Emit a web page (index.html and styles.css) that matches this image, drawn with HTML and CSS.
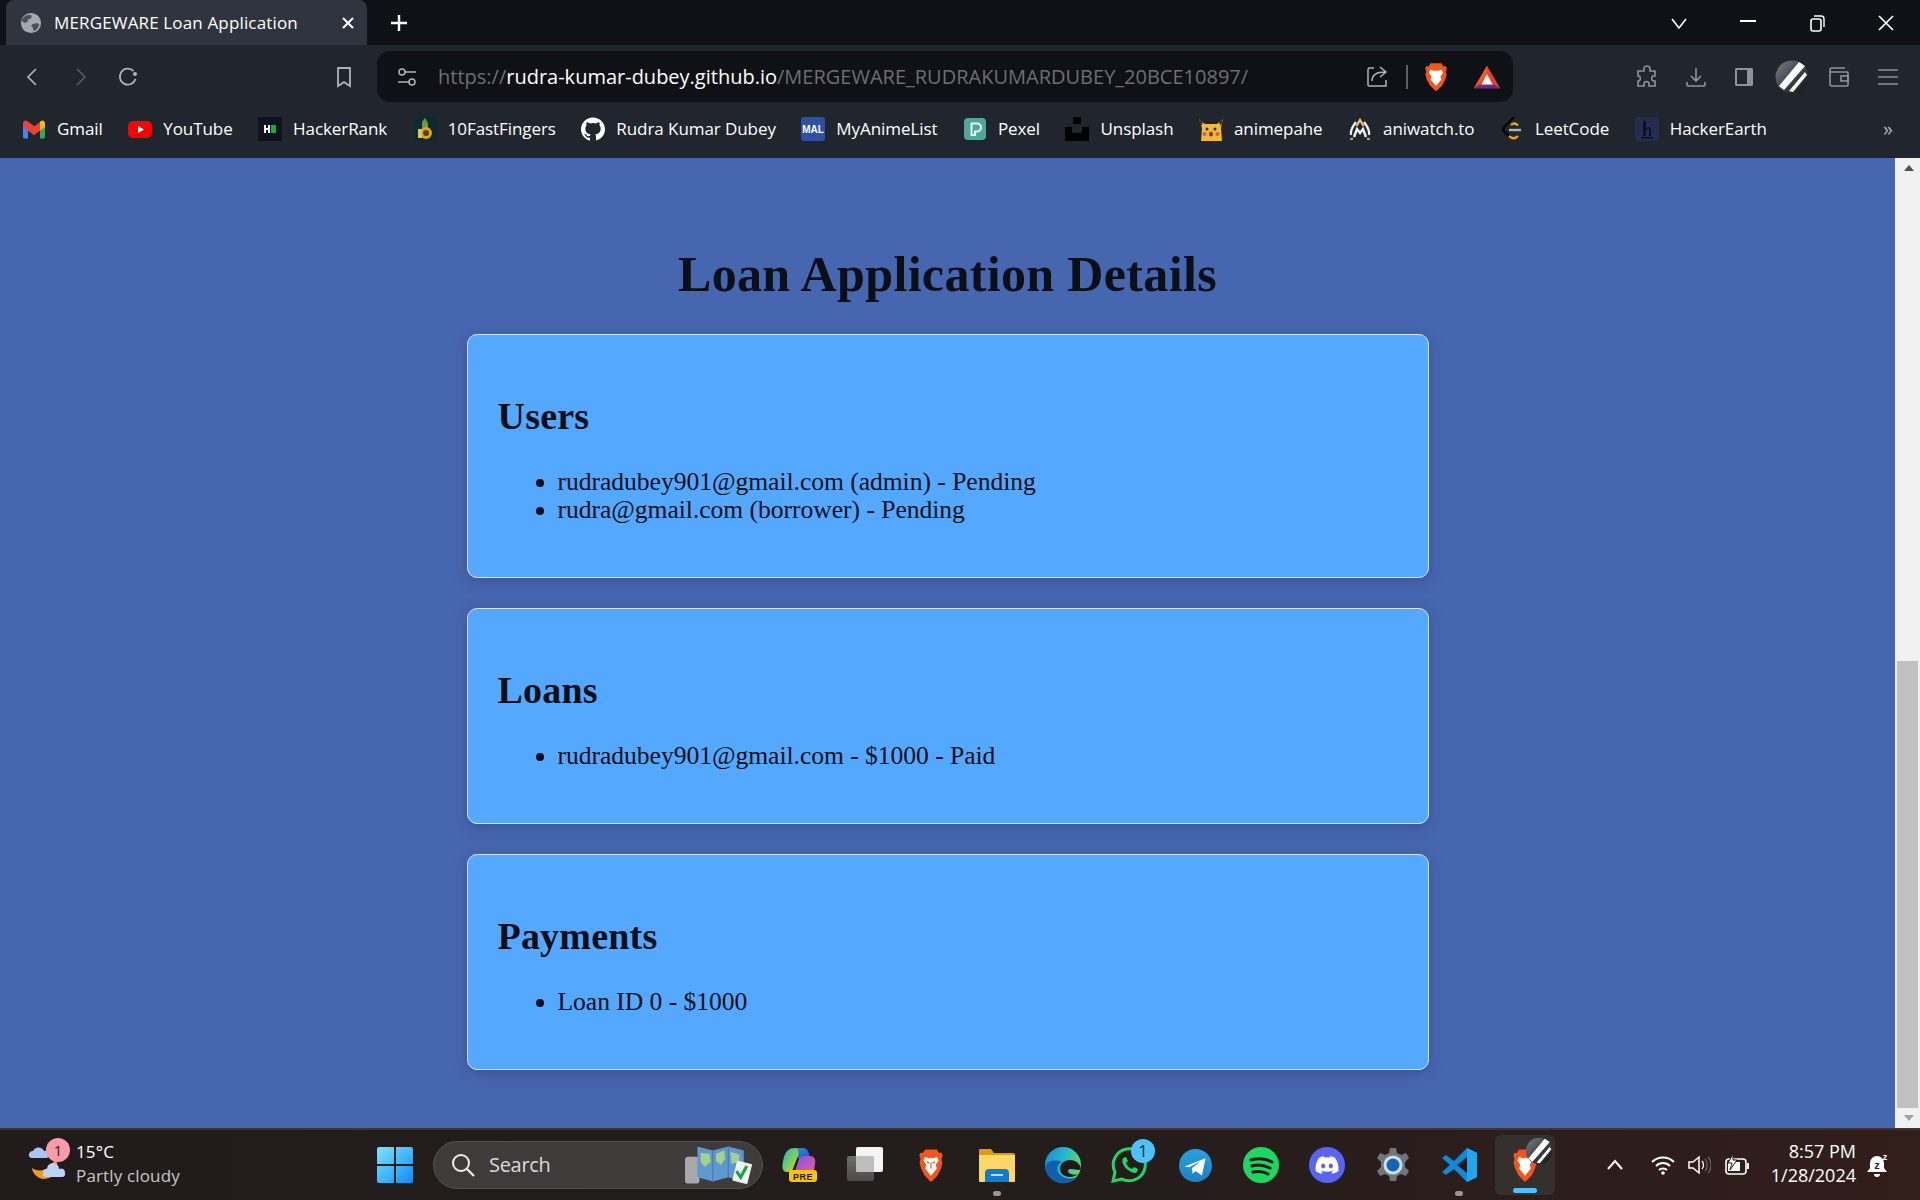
FILE: index.html
```html
<!DOCTYPE html>
<html lang="en">
<head>
<meta charset="utf-8">
<title>MERGEWARE Loan Application</title>
<link rel="stylesheet" href="styles.css">
</head>
<body>
<header class="browser">
  <div class="tabstrip">
    <div class="tab">
      <svg class="tab-globe" viewBox="0 0 24 24"><circle cx="12" cy="12" r="11" fill="#a3a8b1"/><path d="M5 5c3-2 6-2 8-1l-1 3-3 1-1 3-3 1-3-2c0-2 1-3 3-5zM14 13l5-1 2 2c-1 3-3 6-6 7l-1-4-2-2z" fill="#4c5059"/></svg>
      <span class="tab-title">MERGEWARE Loan Application</span>
      <svg class="tab-close" viewBox="0 0 14 14"><path d="M2 2l10 10M12 2L2 12" stroke="#fff" stroke-width="2"/></svg>
    </div>
    <svg class="new-tab" viewBox="0 0 18 18"><path d="M9 1v16M1 9h16" stroke="#fff" stroke-width="2.4"/></svg>
    <div class="win-controls">
      <svg class="wc" viewBox="0 0 18 18"><path d="M2 5l7 9 7-9" fill="none" stroke="#fff" stroke-width="1.6"/></svg>
      <svg class="wc" viewBox="0 0 18 18"><path d="M1 7h16" stroke="#fff" stroke-width="2"/></svg>
      <svg class="wc" viewBox="0 0 18 18"><rect x="3" y="5" width="10" height="12" rx="2" fill="none" stroke="#fff" stroke-width="1.6"/><path d="M6 2h7a3 3 0 0 1 3 3v8" fill="none" stroke="#fff" stroke-width="1.4"/></svg>
      <svg class="wc" viewBox="0 0 18 18"><path d="M2 2l14 14M16 2L2 16" stroke="#fff" stroke-width="1.7"/></svg>
    </div>
  </div>
  <div class="toolbar">
    <svg class="tb tb-back" viewBox="0 0 24 24"><path d="M15 4l-8 8 8 8" fill="none" stroke="#aeb4bd" stroke-width="1.7"/></svg>
    <svg class="tb tb-fwd" viewBox="0 0 24 24"><path d="M9 4l8 8-8 8" fill="none" stroke="#565b64" stroke-width="1.7"/></svg>
    <svg class="tb tb-reload" viewBox="0 0 24 24"><path d="M19.500 14a8 8 0 1 1-2-8" fill="none" stroke="#aeb4bd" stroke-width="1.8"/><circle cx="19" cy="9" r="2" fill="#aeb4bd"/></svg>
    <svg class="tb tb-mark" viewBox="0 0 24 24"><path d="M6 3h12v18l-6-4-6 4z" fill="none" stroke="#aeb4bd" stroke-width="1.8"/></svg>
    <div class="urlbar">
      <svg class="url-tune" viewBox="0 0 24 24"><circle cx="7" cy="7" r="3" fill="none" stroke="#aeb4bd" stroke-width="1.5"/><path d="M10 7h11M3 17h11" stroke="#aeb4bd" stroke-width="1.5"/><circle cx="17" cy="17" r="3" fill="none" stroke="#aeb4bd" stroke-width="1.5"/></svg>
      <div class="url-text"><span class="url-dim">https://</span><span class="url-host">rudra-kumar-dubey.github.io</span><span class="url-dim">/MERGEWARE_RUDRAKUMARDUBEY_20BCE10897/</span></div>
      <svg class="url-share" viewBox="0 0 24 24"><path d="M9 3H4a2 2 0 0 0-1 2v15a1 1 0 0 0 1 1h17v-6" fill="none" stroke="#aeb4bd" stroke-width="1.5"/><path d="M7 16c0-6 5-9 13-9M15 2l6 5-6 5" fill="none" stroke="#aeb4bd" stroke-width="1.5"/></svg>
      <span class="url-sep"></span>
      <svg class="url-brave" viewBox="0 0 24 24" preserveAspectRatio="none"><path d="M7 1h10l2 2.500 2-.3 1 2-1 2.500.8 2.500-1.300 4-3 4.800L12.500 23h-1L6.500 18.800l-3-4.800-1.300-4L3 7.500 2 5l1-1.800 2 .3z" fill="#f1561f"/><path d="M7 6l3.500 1.200L12 6.500l1.500.7L17 6l1.500 2.500-2.500 3 1 2.500-3.500 3.500-1.500 1.500-1.500-1.500L7 14l1-2.500-2.500-3z" fill="#fff"/></svg>
      <svg class="url-bat" viewBox="0 0 30 26"><path d="M15 1L29 25H1z" fill="#e8432e"/><path d="M15 1v10L1 25z" fill="#f05a28"/><path d="M1 25l6-4h16l6 4z" fill="#662d91"/><path d="M15 10l6 11H9z" fill="#fff"/></svg>
    </div>
    <svg class="tb tb-puzzle" viewBox="0 0 24 24"><path d="M9 4a3 3 0 0 1 6 0v2h5v5h-2a3 3 0 0 0 0 5h2v5h-6v-2a2.500 2.500 0 0 0-5 0v2H3v-5h1a3 3 0 0 0 0-5H3V6h6z" fill="none" stroke="#8c939e" stroke-width="1.6"/></svg>
    <svg class="tb tb-dl" viewBox="0 0 24 24"><path d="M12 3v13M7 11l5 5 5-5M3 17v3a1 1 0 0 0 1 1h16a1 1 0 0 0 1-1v-3" fill="none" stroke="#8c939e" stroke-width="1.6"/></svg>
    <svg class="tb tb-side" viewBox="0 0 24 24"><rect x="3" y="3" width="18" height="18" rx="1.500" fill="#8c939e"/><rect x="5" y="5" width="10" height="14" fill="#21252d"/></svg>
    <svg class="tb-avatar" viewBox="0 0 34 34"><defs><linearGradient id="av" x1="0" y1="0" x2="1" y2="1"><stop offset="0" stop-color="#7a7e88"/><stop offset="1" stop-color="#0c0c0e"/></linearGradient></defs><circle cx="17" cy="17" r="16.500" fill="url(#av)"/><path d="M24 2l6 4L9 30l-5-4zM30 12l2 3-14 17-4-1z" fill="#fff"/></svg>
    <svg class="tb tb-wallet" viewBox="0 0 24 24"><path d="M18 3H5a2 2 0 0 0-2 2v14a2 2 0 0 0 2 2h15a1 1 0 0 0 1-1V8a1 1 0 0 0-1-1H3" fill="none" stroke="#8c939e" stroke-width="1.6"/><rect x="14" y="11" width="7" height="5" fill="none" stroke="#8c939e" stroke-width="1.6"/></svg>
    <svg class="tb tb-menu" viewBox="0 0 24 24"><path d="M2 5h20M2 12h20M2 19h20" stroke="#8c939e" stroke-width="1.6"/></svg>
  </div>
  <nav class="bookmarks">
    <a class="bm"><svg class="bm-ico" viewBox="0 0 24 24"><path d="M1 7v13a1.500 1.500 0 0 0 1.500 1.500H6V10z" fill="#4285f4"/><path d="M18 10v11.500h3.500A1.500 1.500 0 0 0 23 20V7z" fill="#34a853"/><path d="M1 6.500C1 4 3.500 2.800 5.500 4.200L12 9l6 4.500-6 4.500-6-4.500L1 10z" fill="#ea4335"/><path d="M6 13.500L12 18l6-4.500V5l-6 4.500L6 5z" fill="#ea4335"/><path d="M18 5l.5-.8C20.500 2.800 23 4 23 6.500V10l-5 3.500z" fill="#fbbc04"/></svg><span>Gmail</span></a>
    <a class="bm"><svg class="bm-ico" viewBox="0 0 24 24"><rect x="0" y="4" width="24" height="17" rx="5" fill="#fe0000"/><path d="M10 9l6 3.500-6 3.500z" fill="#fff"/></svg><span>YouTube</span></a>
    <a class="bm"><svg class="bm-ico" viewBox="0 0 24 24"><rect width="24" height="24" fill="#0e141e"/><path d="M6 8h2v3h2V8h2v8h-2v-3H8v3H6z" fill="#fff"/><rect x="13" y="8" width="5" height="8" fill="#1ba94c"/></svg><span>HackerRank</span></a>
    <a class="bm"><svg class="bm-ico" viewBox="0 0 24 24"><rect width="24" height="24" fill="#0d2a33"/><path d="M9 12V5l3-4 3 5v7z" fill="#6c9b3d"/><circle cx="13" cy="16" r="6" fill="#d9a520"/><circle cx="13" cy="16" r="3" fill="#574012"/><rect x="5" y="12" width="4" height="9" fill="#e6c34d"/></svg><span>10FastFingers</span></a>
    <a class="bm"><svg class="bm-ico" viewBox="0 0 24 24"><path d="M12 .500C5.370.500 0 5.780 0 12.290c0 5.210 3.440 9.630 8.210 11.190.6.110.82-.26.82-.57v-2.200c-3.340.710-4.040-1.570-4.040-1.570-.55-1.370-1.330-1.740-1.330-1.740-1.090-.73.080-.72.080-.72 1.200.080 1.840 1.210 1.840 1.210 1.070 1.800 2.810 1.280 3.490.980.110-.76.420-1.280.76-1.570-2.670-.3-5.470-1.310-5.470-5.830 0-1.290.47-2.340 1.230-3.170-.12-.3-.53-1.500.12-3.120 0 0 1-.32 3.300 1.210a11.700 11.700 0 0 1 6 0c2.300-1.530 3.300-1.210 3.300-1.210.65 1.620.24 2.820.12 3.120.77.83 1.230 1.880 1.230 3.170 0 4.530-2.810 5.530-5.480 5.820.43.37.81 1.090.81 2.200v3.260c0 .32.22.69.83.58C20.570 21.910 24 17.500 24 12.290 24 5.780 18.630.5 12 .5z" fill="#fff"/></svg><span>Rudra Kumar Dubey</span></a>
    <a class="bm"><svg class="bm-ico" viewBox="0 0 24 24"><rect width="24" height="24" rx="3" fill="#2e51a2"/><text x="12" y="15.500" text-anchor="middle" class="mal">MAL</text></svg><span>MyAnimeList</span></a>
    <a class="bm"><svg class="bm-ico" viewBox="0 0 24 24"><rect x="1" y="1" width="22" height="22" rx="4" fill="#4fa99a"/><path d="M8.500 18V6.500H14a4 4 0 0 1 0 8h-2V18z" fill="none" stroke="#e6f3f0" stroke-width="2"/></svg><span>Pexel</span></a>
    <a class="bm"><svg class="bm-ico" viewBox="0 0 24 24"><path d="M8 0h8v7H8zM0 10h7v6h10v-6h7v14H0z" fill="#000"/></svg><span>Unsplash</span></a>
    <a class="bm"><svg class="bm-ico" viewBox="0 0 24 24"><path d="M0 2l6 5h12l6-5-2 9 1 13H2l1-13z" fill="#f0b93c"/><path d="M0 2l4 3.500L2 9zM24 2l-4 3.500L22 9z" fill="#3b2a10"/><circle cx="8" cy="12" r="1.500" fill="#3b2a10"/><circle cx="16" cy="12" r="1.500" fill="#3b2a10"/><circle cx="5.500" cy="17" r="2" fill="#e25a3a"/><circle cx="18.500" cy="17" r="2" fill="#e25a3a"/><ellipse cx="12" cy="17" rx="2" ry="2.500" fill="#7a3a18"/></svg><span>animepahe</span></a>
    <a class="bm"><svg class="bm-ico" viewBox="0 0 24 24"><path d="M3 18C2 13 5 9 8 5M21 18c1-5-2-9-5-13" fill="none" stroke="#eee" stroke-width="2.200"/><path d="M6 20l3-8 3 4 3-4 3 8" fill="none" stroke="#eee" stroke-width="2.400"/><path d="M8.500 9L12 3l3.500 6" fill="none" stroke="#f0c674" stroke-width="2.200"/><path d="M2 22h3M19 22h3" stroke="#f0c674" stroke-width="1.400"/></svg><span>aniwatch.to</span></a>
    <a class="bm"><svg class="bm-ico" viewBox="0 0 24 24"><path d="M14 0L4 10.500c-1 1.200-1 2.800 0 4L10 20" fill="none" stroke="#000" stroke-width="2.400"/><path d="M18 8.500c-2-2.500-5-2.500-7-.5M9 19c3 3 6 3 9 0" fill="none" stroke="#f89f1b" stroke-width="2.400"/><path d="M9 13h12" stroke="#b3b3b3" stroke-width="2.400"/></svg><span>LeetCode</span></a>
    <a class="bm"><svg class="bm-ico" viewBox="0 0 24 24"><rect width="24" height="24" rx="2" fill="#252c4d"/><path d="M8 4h3v7c3-2 5-1 5 2v6h-2v-6c0-2-2-1-3 0v6H8zM6 20h12v1.500H6z" fill="#0c1120"/></svg><span>HackerEarth</span></a>
    <span class="bm-more">»</span>
  </nav>
</header>

<div class="viewport">
  <main class="page">
    <h1 class="page-title">Loan Application Details</h1>
    <section class="card">
      <h2>Users</h2>
      <ul>
        <li>rudradubey901@gmail.com (admin) - Pending</li>
        <li>rudra@gmail.com (borrower) - Pending</li>
      </ul>
    </section>
    <section class="card">
      <h2>Loans</h2>
      <ul>
        <li>rudradubey901@gmail.com - $1000 - Paid</li>
      </ul>
    </section>
    <section class="card">
      <h2>Payments</h2>
      <ul>
        <li>Loan ID 0 - $1000</li>
      </ul>
    </section>
  </main>
  <div class="scrollbar">
    <div class="sb-btn"><span class="sb-up"></span></div>
    <div class="sb-track"><div class="sb-thumb"></div></div>
    <div class="sb-btn"><span class="sb-down"></span></div>
  </div>
</div>

<footer class="taskbar">
  <div class="weather">
    <div class="weather-icon">
      <svg viewBox="0 0 44 44"><path d="M27 15a13 13 0 0 1 2 10 13 13 0 0 1-13 11C9 36 4 29 4 25c5 4 13 3 18-2 3-3 5-6 5-8z" fill="#f39a23"/><path d="M1 11a4 4 0 0 1 4-3 6 6 0 0 1 11 0 4 4 0 0 1 5 4 3 3 0 0 1-3 3H4a3 3 0 0 1-3-4z" fill="#a9c5ee"/><path d="M15 30a4 4 0 0 1 4-4 6 6 0 0 1 12 0 4 4 0 0 1 6 4 3 3 0 0 1-3 4H18a3 3 0 0 1-3-4z" fill="#bcd3f5"/></svg>
      <span class="weather-badge">1</span>
    </div>
    <div class="weather-text"><span class="w-temp">15°C</span><span class="w-desc">Partly cloudy</span></div>
  </div>
  <div class="tb-slot">
    <svg class="tb-win" viewBox="0 0 36 36"><defs><linearGradient id="wn" x1="0" y1="0" x2="1" y2="1"><stop offset="0" stop-color="#7de5fd"/><stop offset="1" stop-color="#0a8dfa"/></linearGradient></defs><path d="M0 2a2 2 0 0 1 2-2h15v17H0zM19 0h15a2 2 0 0 1 2 2v15H19zM0 19h17v17H2a2 2 0 0 1-2-2zM19 19h17v15a2 2 0 0 1-2 2H19z" fill="url(#wn)"/></svg>
  </div>
  <div class="search">
    <svg class="search-ico" viewBox="0 0 24 24"><circle cx="10" cy="10" r="8" fill="none" stroke="#eee" stroke-width="2"/><path d="M16 16l7 7" stroke="#eee" stroke-width="2.200"/></svg>
    <span class="search-text">Search</span>
    <svg class="search-art" viewBox="0 0 66 44"><rect x="1" y="14" width="14" height="26" rx="3" fill="#a8a8ac"/><path d="M13 4l15 4 15-4 15 4v30l-15-4-15 4-15-4z" fill="#5f97cf"/><path d="M28 8v30M43 4v30" stroke="#3f78b4" stroke-width="1"/><path d="M16 10l9 1 1 8-6 5-4-5zM31 11l8-3 1 8-4 6-5-4zM45 9l9 3-1 7-7 2z" fill="#a3cf8f"/><rect x="49" y="19" width="15" height="20" rx="1" transform="rotate(14 56 29)" fill="#f2f2f2"/><path d="M51 28l4 6 6-11" fill="none" stroke="#19a33a" stroke-width="3"/></svg>
  </div>
  <div class="tb-slot">
    <svg class="tb-app" viewBox="0 0 36 36"><defs><linearGradient id="cpa" x1="0" y1="0" x2="1" y2="1"><stop offset="0" stop-color="#20b2d8"/><stop offset=".55" stop-color="#7ccf5a"/><stop offset="1" stop-color="#f5c92c"/></linearGradient><linearGradient id="cpb" x1="0" y1="0" x2="1" y2="1"><stop offset="0" stop-color="#2a8be6"/><stop offset="1" stop-color="#1b55c8"/></linearGradient><linearGradient id="cpc" x1="0" y1="0" x2="1" y2="1"><stop offset="0" stop-color="#7b55e6"/><stop offset="1" stop-color="#ec5aa8"/></linearGradient></defs><path d="M14 1h8c4 0 5 3 6 6l2 6H18z" fill="url(#cpb)"/><path d="M24 9h5c4 0 6 3 5 8l-1 6c-1 3-3 4-6 4H13l4-12c1-4 3-6 7-6z" fill="url(#cpc)"/><path d="M14 1C8 1 5 4 3 10c-2 7-3 15 3 15 4 0 6-2 7-6l4-10c1-4 1-8-3-8z" fill="url(#cpa)"/><rect x="8" y="23" width="28" height="12" rx="3" fill="#ffc20e"/><text x="22" y="33" text-anchor="middle" class="pre">PRE</text></svg>
  </div>
  <div class="tb-slot">
    <svg class="tb-app" viewBox="0 0 36 36"><defs><linearGradient id="tvb" x1="0" y1="0" x2="0" y2="1"><stop offset="0" stop-color="#6e6e6e"/><stop offset="1" stop-color="#4a4a4a"/></linearGradient></defs><rect x="0" y="9" width="27" height="25" rx="2" fill="url(#tvb)"/><rect x="9" y="0" width="27" height="25" rx="2" fill="#f4f4f4"/><rect x="9" y="9" width="18" height="16" rx="1" fill="#bdbdbd"/></svg>
  </div>
  <div class="tb-slot">
    <svg class="tb-brave" viewBox="0 0 24 24" preserveAspectRatio="none"><path d="M7 1h10l2 2.500 2-.3 1 2-1 2.500.8 2.500-1.300 4-3 4.800L12.500 23h-1L6.500 18.800l-3-4.800-1.300-4L3 7.500 2 5l1-1.800 2 .3z" fill="#f1561f"/><path d="M7 6l3.500 1.200L12 6.500l1.500.7L17 6l1.500 2.500-2.500 3 1 2.500-3.500 3.500-1.500 1.500-1.500-1.500L7 14l1-2.500-2.500-3z" fill="#fff"/><path d="M8.500 9.500l2 .8M15.500 9.500l-2 .8M12 10v4" stroke="#f1561f" stroke-width="1"/></svg>
  </div>
  <div class="tb-slot">
    <svg class="tb-app" viewBox="0 0 36 36"><path d="M0 3a1 1 0 0 1 1-1h11l3 4h19a2 2 0 0 1 2 2v4H0z" fill="#d99e10"/><path d="M0 8h36v26a1 1 0 0 1-1 1H1a1 1 0 0 1-1-1z" fill="#fcd667"/><path d="M6 35V26a4 4 0 0 1 4-4h16a4 4 0 0 1 4 4v9z" fill="#0f7bd1"/><rect x="12" y="27" width="12" height="2" fill="#bfe0fa"/></svg>
    <span class="dot"></span>
  </div>
  <div class="tb-slot">
    <svg class="tb-app" viewBox="0 0 36 36"><defs><linearGradient id="ed" x1="0" y1=".3" x2="1" y2=".6"><stop offset="0" stop-color="#1590d8"/><stop offset=".55" stop-color="#2cbcc4"/><stop offset="1" stop-color="#71d95c"/></linearGradient></defs><circle cx="18" cy="18" r="18" fill="url(#ed)"/><path d="M.5 20C1 30 9 36 18 36c6 0 11-2 14-6-7 3-16 1-19-5-2-5 0-8 4-10C9 12 1 14 .5 20z" fill="#0f5fae"/><path d="M36 22c-1-6-6-9-11-9-6 0-10 4-10 9 0 5 5 8 10 8 3 0 6-1 8-3-3 1-6 1-9-1-2-2-1-4 2-4 4 0 8 2 10 0z" fill="#1e1a1a"/></svg>
  </div>
  <div class="tb-slot">
    <svg class="tb-app" viewBox="0 0 36 36"><path d="M2 34l2-9a16 16 0 1 1 7 7z" fill="none" stroke="#25d366" stroke-width="3"/><path d="M12 11l3-1 2 4-2 2c1 3 3 5 6 6l2-2 4 2-1 3c-1 2-5 1-9-2s-7-8-5-12z" fill="#25d366"/></svg>
    <span class="wa-badge">1</span>
  </div>
  <div class="tb-slot">
    <svg class="tb-app tb-small" viewBox="0 0 36 36"><defs><linearGradient id="tg" x1="0" y1="0" x2="0" y2="1"><stop offset="0" stop-color="#2a9fde"/><stop offset="1" stop-color="#1b83c4"/></linearGradient></defs><circle cx="18" cy="18" r="18" fill="url(#tg)"/><path d="M6 19l23-9-4 19-7-5-3 3-1-6 10-8-13 7z" fill="#fff"/></svg>
  </div>
  <div class="tb-slot">
    <svg class="tb-app" viewBox="0 0 36 36"><circle cx="18" cy="18" r="18" fill="#1ed760"/><path d="M8 13c7-2 14-2 21 2M9 19c6-2 12-1 18 2M10 25c5-1 10-1 15 2" fill="none" stroke="#1d1917" stroke-width="3" stroke-linecap="round"/></svg>
  </div>
  <div class="tb-slot">
    <svg class="tb-app" viewBox="0 0 36 36"><circle cx="18" cy="18" r="18" fill="#5865f2"/><g transform="translate(6.500 6.500) scale(.96)"><path d="M20.317 4.37a19.791 19.791 0 0 0-4.885-1.515.074.074 0 0 0-.079.037c-.21.375-.444.864-.608 1.25a18.27 18.27 0 0 0-5.487 0 12.64 12.64 0 0 0-.617-1.25.077.077 0 0 0-.079-.037A19.736 19.736 0 0 0 3.677 4.37a.07.07 0 0 0-.032.027C.533 9.046-.32 13.58.099 18.057a.082.082 0 0 0 .031.057 19.9 19.9 0 0 0 5.993 3.03.078.078 0 0 0 .084-.028 14.09 14.09 0 0 0 1.226-1.994.076.076 0 0 0-.041-.106 13.107 13.107 0 0 1-1.872-.892.077.077 0 0 1-.008-.128 10.2 10.2 0 0 0 .372-.292.074.074 0 0 1 .077-.01c3.928 1.793 8.18 1.793 12.062 0a.074.074 0 0 1 .078.01c.12.098.246.198.373.292a.077.077 0 0 1-.006.127 12.299 12.299 0 0 1-1.873.892.077.077 0 0 0-.041.107c.36.698.772 1.362 1.225 1.993a.076.076 0 0 0 .084.028 19.839 19.839 0 0 0 6.002-3.03.077.077 0 0 0 .032-.054c.5-5.177-.838-9.674-3.549-13.66a.061.061 0 0 0-.031-.03zM8.02 15.33c-1.183 0-2.157-1.085-2.157-2.419 0-1.333.956-2.419 2.157-2.419 1.21 0 2.176 1.096 2.157 2.42 0 1.333-.956 2.418-2.157 2.418zm7.975 0c-1.183 0-2.157-1.085-2.157-2.419 0-1.333.955-2.419 2.157-2.419 1.21 0 2.176 1.096 2.157 2.42 0 1.333-.946 2.418-2.157 2.418z" fill="#fff"/></g></svg>
  </div>
  <div class="tb-slot">
    <svg class="tb-app" viewBox="0 0 36 36"><path d="M15 1h6l1 5 4 2 5-2 3 5-4 4v5l4 4-3 5-5-2-4 2-1 5h-6l-1-5-4-2-5 2-3-5 4-4v-5L2 11l3-5 5 2 4-2z" fill="#6e7780"/><circle cx="18" cy="18" r="9.500" fill="#d6dde2"/><circle cx="18" cy="18" r="6.500" fill="#0f67b8"/></svg>
  </div>
  <div class="tb-slot">
    <svg class="tb-app" viewBox="0 0 36 36"><path d="M26 1l10 5v24l-10 5-13-13-8 6-4-3 8-7-8-7 4-3 8 6z" fill="#0f8ad6"/><path d="M26 1l10 5v24l-10 5z" fill="#23a5ee"/><path d="M26 10v16l-10-8z" fill="#1c1a1a"/></svg>
    <span class="dot"></span>
  </div>
  <div class="tb-slot">
    <div class="tb-active">
      <svg class="tb-brave" viewBox="0 0 24 24" preserveAspectRatio="none"><path d="M7 1h10l2 2.500 2-.3 1 2-1 2.500.8 2.500-1.300 4-3 4.800L12.500 23h-1L6.500 18.800l-3-4.800-1.300-4L3 7.500 2 5l1-1.800 2 .3z" fill="#f1561f"/><path d="M7 6l3.500 1.200L12 6.500l1.500.7L17 6l1.500 2.500-2.500 3 1 2.500-3.500 3.500-1.500 1.500-1.500-1.500L7 14l1-2.500-2.500-3z" fill="#fff"/></svg>
      <svg class="tb-mini" viewBox="0 0 34 34"><circle cx="17" cy="17" r="16" fill="url(#av)"/><path d="M24 2l6 4L9 30l-5-4zM30 12l2 3-14 17-4-1z" fill="#fff"/></svg>
      <span class="active-bar"></span>
    </div>
  </div>
  <div class="tray">
    <svg class="tr-chev" viewBox="0 0 18 12"><path d="M2 10l7-8 7 8" fill="none" stroke="#fff" stroke-width="2"/></svg>
    <svg class="tr-wifi" viewBox="0 0 24 20"><path d="M1 7c6-6 16-6 22 0M5 11c4-4 10-4 14 0M8 15c2-2 6-2 8 0" fill="none" stroke="#fff" stroke-width="1.800"/><circle cx="12" cy="18" r="1.800" fill="#fff"/></svg>
    <svg class="tr-vol" viewBox="0 0 24 20"><path d="M2 7h4l6-5v16l-6-5H2z" fill="none" stroke="#fff" stroke-width="1.500"/><path d="M15 6c2 2 2 6 0 8" fill="none" stroke="#fff" stroke-width="1.300"/><path d="M18 4c3 3 3 9 0 12M21 2c4 4 4 12 0 16" fill="none" stroke="#6b6462" stroke-width="1.300"/></svg>
    <svg class="tr-bat" viewBox="0 0 26 22"><rect x="2" y="5" width="20" height="15" rx="3" fill="none" stroke="#fff" stroke-width="1.600"/><rect x="4" y="8" width="12" height="9" fill="#fff"/><rect x="23" y="9" width="2" height="6" fill="#fff"/><path d="M9 0L4 9h4l-2 7 7-10H9z" fill="#fff" stroke="#211c1c"/></svg>
    <div class="clock"><span>8:57 PM</span><span>1/28/2024</span></div>
    <svg class="tr-bell" viewBox="0 0 24 26"><path d="M12 4a7 7 0 0 0-7 7v5l-3 4h20l-3-4v-5a7 7 0 0 0-7-7z" fill="#fff"/><path d="M9 22h6a3 3 0 0 1-6 0z" fill="#fff"/><text x="12" y="17" text-anchor="middle" class="zz">z</text><text x="20" y="8" text-anchor="middle" class="zz2">z</text></svg>
  </div>
</footer>
</body>
</html>
```
FILE: styles.css
```css
* { box-sizing: border-box; }
html, body { margin: 0; height: 100%; }
body {
  width: 1920px;
  height: 1200px;
  overflow: hidden;
  display: flex;
  flex-direction: column;
  font-family: "Open Sans", "Noto Sans", sans-serif;
  background: #4766b0;
}
svg { display: block; flex: none; }

/* Browser chrome */
.browser { flex: none; height: 158px; background: #21252d; color: #fff; }
.tabstrip { height: 45px; background: #0f1117; display: flex; align-items: center; padding-left: 6px; }
.tab {
  width: 361px; height: 45px; background: #30343e; border-radius: 8px 8px 0 0;
  display: flex; align-items: center; padding: 0 12px 0 14px;
}
.tab-globe { width: 22px; height: 22px; }
.tab-title { margin-left: 12px; flex: 1; font-size: 17px; letter-spacing: .15px; color: #fff; white-space: nowrap; }
.tab-close { width: 14px; height: 14px; }
.new-tab { width: 18px; height: 18px; margin-left: 23px; }
.win-controls { margin-left: auto; display: flex; gap: 51px; padding-right: 25px; }
.wc { width: 18px; height: 18px; }

.toolbar { height: 57px; display: flex; align-items: center; padding-top: 6px; }
.tb { width: 24px; height: 24px; }
.tb-back { margin-left: 21px; }
.tb-fwd { margin-left: 23px; }
.tb-reload { margin-left: 24px; }
.tb-mark { margin-left: 192px; }
.urlbar {
  width: 1136px; height: 51px; margin-left: 21px; background: #0f1117; border-radius: 13px;
  display: flex; align-items: center; padding-left: 18px;
}
.url-tune { width: 24px; height: 24px; }
.url-text { margin-left: 19px; width: 912px; font-size: 20px; white-space: nowrap; }
.url-dim { color: #6c6f75; }
.url-host { color: #fff; }
.url-share { width: 24px; height: 24px; margin-left: 15px; }
.url-sep { width: 2px; height: 24px; background: #5c6068; margin-left: 17px; }
.url-brave { width: 26px; height: 30px; margin-left: 15px; }
.url-bat { width: 28px; height: 26px; margin-left: 24px; }
.tb-puzzle { margin-left: 122px; }
.tb-dl { margin-left: 25px; }
.tb-side { margin-left: 24px; }
.tb-avatar { width: 34px; height: 34px; margin-left: 19px; }
.tb-wallet { margin-left: 18px; }
.tb-menu { margin-left: 25px; }

.bookmarks { height: 56px; display: flex; align-items: center; padding: 0 0 3px 22px; }
.bm { display: flex; align-items: center; margin-right: 25.45px; font-size: 17px; letter-spacing: -.07px; color: #fff; white-space: nowrap; }
.bm-ico { width: 24px; height: 24px; margin-right: 11px; }
.bm-more { margin-left: auto; margin-right: 27px; font-size: 20px; color: #aeb4bd; }
.mal { font: 700 10px "Liberation Sans", sans-serif; fill: #fff; }

/* Page */
.viewport { flex: 1; min-height: 0; display: flex; }
.page {
  flex: 1; min-width: 0; background: #4766b0; color: #0c0f17;
  font-family: "Liberation Serif", "Times New Roman", serif; padding-top: 88px;
}
.page-title {
  margin: 0 0 32px; text-align: center; font-size: 50px; line-height: 56px; font-weight: 700;
  letter-spacing: .35px;
}
.card {
  width: 962px; margin: 0 auto 30px; padding: 30px; background: #55a8ff;
  border: 1px solid #d8e2f0; border-radius: 10px; box-shadow: 0 3px 14px rgba(40, 50, 90, .35);
}
.card h2 { margin: 30px 0; font-size: 38px; line-height: 42px; font-weight: 700; letter-spacing: .2px; }
.card ul { margin: 0 0 23px; padding: 1px 0 0 60px; }
.card li { font-size: 25.6px; line-height: 28px; letter-spacing: -.04px; }

.scrollbar { width: 25px; background: #f1f1f1; display: flex; flex-direction: column; padding-left: 2px; }
.sb-btn { flex: none; height: 20px; display: flex; align-items: center; justify-content: center; }
.sb-up { border: 5px solid transparent; border-top: 0; border-bottom: 6px solid #505050; }
.sb-down { border: 5px solid transparent; border-bottom: 0; border-top: 6px solid #a3a3a3; }
.sb-track { flex: 1; padding-top: 483px; padding-right: 2px; }
.sb-thumb { height: 447px; background: #c1c1c1; }

/* Taskbar */
.taskbar {
  flex: none; height: 72px; border-top: 2px solid #3a3634;
  background: linear-gradient(90deg, #211c1b 0%, #231d1c 55%, #321e1b 100%);
  display: flex; align-items: center; color: #fff;
}
.weather { width: 362px; display: flex; align-items: center; padding-left: 28px; }
.weather-icon { width: 44px; height: 44px; position: relative; }
.weather-icon svg { width: 44px; height: 44px; }
.weather-badge {
  position: absolute; top: -5px; left: 18px; width: 24px; height: 24px; border-radius: 50%;
  background: #fb9aa8; color: #222; font-size: 15px; line-height: 24px; text-align: center;
}
.weather-text { margin-left: 4px; padding-bottom: 2px; display: flex; flex-direction: column; font-size: 17px; line-height: 24px; letter-spacing: .15px; }
.w-desc { color: #c9c6c4; }
.tb-slot { width: 66px; flex: none; height: 70px; display: flex; align-items: center; justify-content: center; position: relative; }
.tb-win { width: 36px; height: 36px; }
.tb-app { width: 36px; height: 36px; }
.tb-small { width: 33px; height: 33px; }
.tb-brave { width: 28px; height: 35px; }
.search {
  width: 330px; height: 48px; margin: 0 3px 0 5px; flex: none; border-radius: 24px;
  background: #3f3b3a; border: 1px solid #55514f; display: flex; align-items: center; padding-left: 17px;
}
.search-ico { width: 24px; height: 24px; }
.search-text { margin-left: 14px; padding-bottom: 2px; font-size: 20px; letter-spacing: -.3px; color: #dcdad8; }
.search-art { width: 68px; height: 46px; margin-left: auto; margin-right: 10px; }
.dot { position: absolute; bottom: 4px; left: 29px; width: 8px; height: 5px; border-radius: 3px; background: #9a9795; }
.wa-badge {
  position: absolute; top: 9px; right: 7px; width: 24px; height: 24px; border-radius: 50%;
  background: #4cc2ff; color: #1a1a1a; font-size: 16px; line-height: 24px; text-align: center;
}
.tb-active {
  width: 60px; height: 60px; border-radius: 6px; background: #352f2e; position: relative;
  display: flex; align-items: center; justify-content: center;
}
.tb-mini { position: absolute; top: 2px; right: 2px; width: 28px; height: 28px; }
.active-bar { position: absolute; bottom: 2px; left: 18px; width: 24px; height: 5px; border-radius: 3px; background: #4cc2ff; }
.tray { flex: 1; display: flex; align-items: center; padding-left: 48px; }
.tr-chev { width: 18px; height: 12px; }
.tr-wifi { width: 24px; height: 20px; margin-left: 27px; }
.tr-vol { width: 24px; height: 20px; margin-left: 12px; }
.tr-bat { width: 26px; height: 22px; margin-left: 13px; }
.clock { display: flex; flex-direction: column; align-items: flex-end; width: 94px; margin-left: 12px; padding-bottom: 4px; font-size: 18px; line-height: 24px; }
.tr-bell { width: 24px; height: 26px; margin-left: 9px; }
.zz { font: 700 11px "Liberation Sans", sans-serif; fill: #222; }
.zz2 { font: 700 9px "Liberation Sans", sans-serif; fill: #fff; }
.pre { font: 700 9px "Liberation Sans", sans-serif; fill: #222; letter-spacing: .5px; }
```
